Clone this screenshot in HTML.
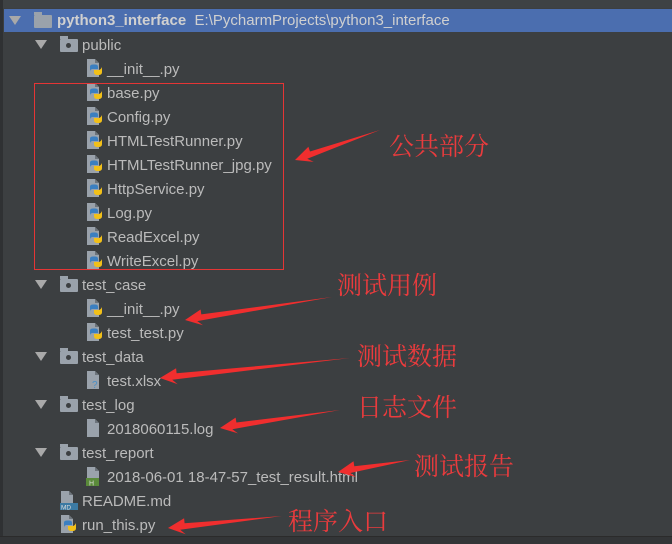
<!DOCTYPE html>
<html><head><meta charset="utf-8"><style>
body{margin:0;width:672px;height:543px;background:#3c3f41;overflow:hidden;position:relative;font-family:"Liberation Sans","DejaVu Sans",sans-serif;font-size:15px;color:#bbbbbb}
.r{position:absolute;height:24px;line-height:24px;white-space:nowrap}
.sel{position:absolute;left:4px;top:9px;width:668px;height:23px;background:#4b6eaf}
.tri{position:absolute;width:0;height:0;border-left:6px solid transparent;border-right:6px solid transparent;border-top:9px solid #a9a9a9}
.fold{position:absolute;width:18px;height:13px;background:#9aa2ab;border-radius:1px}
.fold:before{content:"";position:absolute;left:0;top:-3px;width:8px;height:3px;background:#9aa2ab}
.fold i{position:absolute;left:6px;top:4px;width:5px;height:5px;border-radius:50%;background:#3c3f41}
.py{position:absolute;width:18px;height:20px}
.cn{position:absolute;font-family:"Noto Serif CJK SC","Noto Sans CJK SC",serif;font-size:25px;color:#ea3b3d;line-height:30px}
</style></head><body>
<div style="position:absolute;left:0;top:0;width:672px;height:8px;background:#3e4244"></div>
<div style="position:absolute;left:0;top:0;width:3px;height:543px;background:#2f3133"></div>
<div style="position:absolute;left:0;top:536px;width:672px;height:7px;background:#333537;border-top:1px solid #2b2b2b"></div>
<div class="sel"></div>
<div class="tri" style="left:9px;top:16px"></div>
<div class="fold" style="left:34px;top:15px"></div>
<div class="r" style="left:57px;top:9px;color:#d0d0d0"><b>python3_interface</b>&nbsp; E:\PycharmProjects\python3_interface</div>
<div id="tree"></div>
<div style="position:absolute;left:34px;top:83px;width:248px;height:185px;border:1px solid #e53535"></div>
<div class="cn" style="left:389px;top:130px">公共部分</div>
<div class="cn" style="left:337px;top:269px">测试用例</div>
<div class="cn" style="left:357px;top:340px">测试数据</div>
<div class="cn" style="left:357px;top:391px">日志文件</div>
<div class="cn" style="left:414px;top:450px">测试报告</div>
<div class="cn" style="left:288px;top:505px">程序入口</div>
<svg id="arr" width="672" height="543" style="position:absolute;left:0;top:0"></svg>
<script>
var rows=[
['f',1,'public',44],['p',2,'__init__.py',68],['p',2,'base.py',92],['p',2,'Config.py',116],['p',2,'HTMLTestRunner.py',140],['p',2,'HTMLTestRunner_jpg.py',164],['p',2,'HttpService.py',188],['p',2,'Log.py',212],['p',2,'ReadExcel.py',236],['p',2,'WriteExcel.py',260],
['f',1,'test_case',284],['p',2,'__init__.py',308],['p',2,'test_test.py',332],
['f',1,'test_data',356],['x',2,'test.xlsx',380],
['f',1,'test_log',404],['l',2,'2018060115.log',428],
['f',1,'test_report',452],['h',2,'2018-06-01 18-47-57_test_result.html',476],
['m',1,'README.md',500],['p',1,'run_this.py',524]];
var h='';
rows.forEach(function(r){var t=r[0],c=r[3];
 if(t=='f'){h+='<div class="tri" style="left:35px;top:'+(c-4)+'px"></div><div class="fold" style="left:60px;top:'+(c-5)+'px"><i></i></div><div class="r" style="left:82px;top:'+(c-10)+'px">'+r[2]+'</div>';return;}
 var ix=r[1]==2?86:60,tx=r[1]==2?107:82;
 var s='<svg class="py" style="left:'+ix+'px;top:'+(c-10)+'px" viewBox="0 0 18 20"><path d="M1 1h8l4 4v14H1z" fill="#9aa2ab"/><path d="M9 1v4h4" fill="#6d747b"/>';
 if(t=='p')s+='<path d="M4 9c0-2 1-2.5 4-2.5s4 .5 4 2.5v2H7c-2 0-3 1-3 3z" fill="#3b7fc1"/><path d="M16 14c0 2-1 3-4 3s-4-1-4-3v-2h4c2 0 3-1 4-3z" fill="#f2c019"/>';
 if(t=='x')s+='<text x="6" y="18" font-size="10" fill="#4a90c8" font-family="Liberation Sans">?</text>';
 if(t=='h')s+='<rect x="0" y="12" width="13" height="8" fill="#5a8a3a"/><text x="3" y="19.5" font-size="7" fill="#ddd" font-family="Liberation Sans">H</text>';
 if(t=='m')s+='<rect x="0" y="13" width="18" height="7" fill="#3c7aa3"/><text x="1" y="19.5" font-size="6.5" fill="#ddd" font-family="Liberation Sans">MD</text>';
 s+='</svg>';
 h+=s+'<div class="r" style="left:'+tx+'px;top:'+(c-10)+'px">'+r[2]+'</div>';});
document.getElementById('tree').innerHTML=h;
function arrow(x1,y1,x2,y2){var dx=x2-x1,dy=y2-y1,L=Math.hypot(dx,dy),ux=dx/L,uy=dy/L,nx=-uy,ny=ux;
 var hl=17,hw=8,sw=3;var bx=x2-ux*hl,by=y2-uy*hl;var bx2=x2-ux*(hl-5),by2=y2-uy*(hl-5);
 var p=[[x1,y1],[bx+nx*sw,by+ny*sw],[bx+nx*hw,by+ny*hw],[x2,y2],[bx-nx*hw,by-ny*hw],[bx2-nx*sw,by2-ny*sw]];
 return '<polygon fill="#f02e2e" points="'+p.map(function(q){return q[0].toFixed(1)+','+q[1].toFixed(1)}).join(' ')+'"/>';}
document.getElementById('arr').innerHTML=arrow(380,130,295,160)+arrow(332,297,185,320)+arrow(350,358,160,378)+arrow(340,410,220,428)+arrow(410,460,338,472)+arrow(282,516,168,528);
</script>
</body></html>
